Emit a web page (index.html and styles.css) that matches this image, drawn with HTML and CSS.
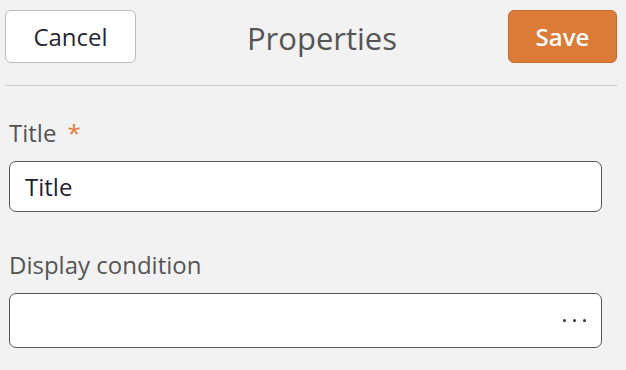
FILE: index.html
```html
<!DOCTYPE html>
<html lang="en">
<head>
<meta charset="utf-8">
<title>Properties</title>
<link rel="stylesheet" href="styles.css">
</head>
<body>
<header class="topbar">
  <button class="btn btn-cancel" type="button">Cancel</button>
  <h1 class="topbar-title">Properties</h1>
  <button class="btn btn-save" type="button">Save</button>
</header>
<main class="form">
  <div class="field field-first">
    <label class="field-label">Title <span class="required">*</span></label>
    <div class="input">Title</div>
  </div>
  <div class="field field-second">
    <label class="field-label">Display condition</label>
    <div class="input input-tall">
      <span class="dots"><i></i><i></i><i></i></span>
    </div>
  </div>
</main>
</body>
</html>
```
FILE: styles.css
```css
html, body {
  margin: 0;
  padding: 0;
  background: #f2f2f2;
  font-family: "Open Sans", "Noto Sans", sans-serif;
}

.topbar {
  display: flex;
  align-items: center;
  margin: 0 9px 0 5px;
  padding: 10px 0 22px;
  border-bottom: 1px solid #cccccc;
}

.btn {
  box-sizing: border-box;
  height: 53px;
  border-radius: 6px;
  font-family: inherit;
  font-size: 24px;
  padding: 0;
  cursor: pointer;
}

.btn-cancel {
  width: 131px;
  background: #ffffff;
  border: 1px solid #bdbdbd;
  color: #262833;
}

.btn-save {
  width: 109px;
  background: #dc7a37;
  border: 1px solid #c86b2d;
  color: #ffffff;
  font-weight: 600;
}

.topbar-title {
  flex: 1;
  margin: 0;
  text-align: center;
  font-size: 31px;
  font-weight: 400;
  color: #555555;
  line-height: 40px;
  padding-top: 2px;
}

.form {
  padding: 0 24px 0 9px;
}

.field-first {
  margin-top: 31px;
}

.field-second {
  margin-top: 37px;
}

.field-label {
  display: block;
  font-size: 24px;
  line-height: 32px;
  color: #555555;
  margin-bottom: 12px;
}

.required {
  color: #e07b39;
  margin-left: 5px;
}

.input {
  box-sizing: border-box;
  height: 51px;
  display: flex;
  align-items: center;
  justify-content: space-between;
  background: #ffffff;
  border: 1px solid #555555;
  border-radius: 7px;
  padding: 0 15px;
  font-size: 24px;
  color: #1f2230;
}

.input-tall {
  height: 55px;
  justify-content: flex-end;
}

.dots {
  display: flex;
  gap: 7px;
}

.dots i {
  display: block;
  width: 3px;
  height: 3px;
  border-radius: 50%;
  background: #333333;
}
```
